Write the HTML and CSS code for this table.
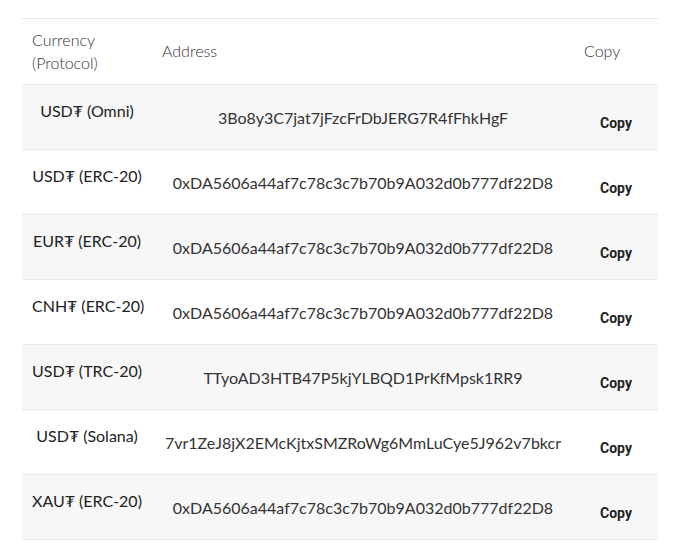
FILE: index.html
```html
<!DOCTYPE html>
<html>
<head>
<meta charset="utf-8">
<link rel="stylesheet" href="styles.css">
</head>
<body>
<div class="wrap">
<table class="addr-table">
  <colgroup>
    <col class="c1"><col class="c2"><col class="c3">
  </colgroup>
  <thead>
    <tr>
      <th class="h-cur">Currency<br>(Protocol)</th>
      <th class="h-addr">Address</th>
      <th class="h-copy">Copy</th>
    </tr>
  </thead>
  <tbody>
    <tr class="alt">
      <td class="cur">USD₮ (Omni)</td>
      <td class="addr">3Bo8y3C7jat7jFzcFrDbJERG7R4fFhkHgF</td>
      <td class="cp"><button class="copy">Copy</button></td>
    </tr>
    <tr>
      <td class="cur">USD₮ (ERC-20)</td>
      <td class="addr">0xDA5606a44af7c78c3c7b70b9A032d0b777df22D8</td>
      <td class="cp"><button class="copy">Copy</button></td>
    </tr>
    <tr class="alt">
      <td class="cur">EUR₮ (ERC-20)</td>
      <td class="addr">0xDA5606a44af7c78c3c7b70b9A032d0b777df22D8</td>
      <td class="cp"><button class="copy">Copy</button></td>
    </tr>
    <tr>
      <td class="cur">CNH₮ (ERC-20)</td>
      <td class="addr">0xDA5606a44af7c78c3c7b70b9A032d0b777df22D8</td>
      <td class="cp"><button class="copy">Copy</button></td>
    </tr>
    <tr class="alt">
      <td class="cur">USD₮ (TRC-20)</td>
      <td class="addr">TTyoAD3HTB47P5kjYLBQD1PrKfMpsk1RR9</td>
      <td class="cp"><button class="copy">Copy</button></td>
    </tr>
    <tr>
      <td class="cur">USD₮ (Solana)</td>
      <td class="addr">7vr1ZeJ8jX2EMcKjtxSMZRoWg6MmLuCye5J962v7bkcr</td>
      <td class="cp"><button class="copy">Copy</button></td>
    </tr>
    <tr class="alt">
      <td class="cur">XAU₮ (ERC-20)</td>
      <td class="addr">0xDA5606a44af7c78c3c7b70b9A032d0b777df22D8</td>
      <td class="cp"><button class="copy">Copy</button></td>
    </tr>
  </tbody>
</table>
</div>
</body>
</html>
```

FILE: styles.css
```css
html, body {
  margin: 0;
  padding: 0;
  background: #ffffff;
}
body {
  font-family: Lato, "DejaVu Sans", sans-serif;
  color: #333;
}
.wrap {
  padding: 18px 25px 0 22px;
}
.addr-table {
  width: 636px;
  border-collapse: collapse;
  table-layout: fixed;
}
.c1 { width: 130px; }
.c2 { width: 422px; }
.c3 { width: 84px; }
.addr-table thead tr {
  height: 66px;
  border-top: 1px solid #e8e8e8;
  border-bottom: 1px solid #e8e8e8;
}
.addr-table th {
  font-weight: 300;
  font-size: 16px;
  line-height: 23px;
  color: #333;
  text-align: left;
  vertical-align: middle;
  padding: 0 10px 2px;
}
.addr-table tbody tr {
  height: 65px;
  border-bottom: 1px solid #e8e8e8;
}
.addr-table tbody tr.alt {
  background: #f7f7f8;
}
.addr-table td {
  vertical-align: middle;
  padding: 0 10px;
  text-align: center;
}
.cur {
  font-size: 16px;
  font-weight: 400;
  color: #222;
  padding-bottom: 14px !important;
  white-space: nowrap;
}
.addr {
  font-size: 16px;
  color: #333;
  white-space: nowrap;
}
.copy {
  font-family: Roboto, "Liberation Sans", sans-serif;
  font-weight: 700;
  font-size: 14px;
  color: #222;
  background: none;
  border: 0;
  padding: 0;
  margin-top: 11px;
  cursor: pointer;
}
```
